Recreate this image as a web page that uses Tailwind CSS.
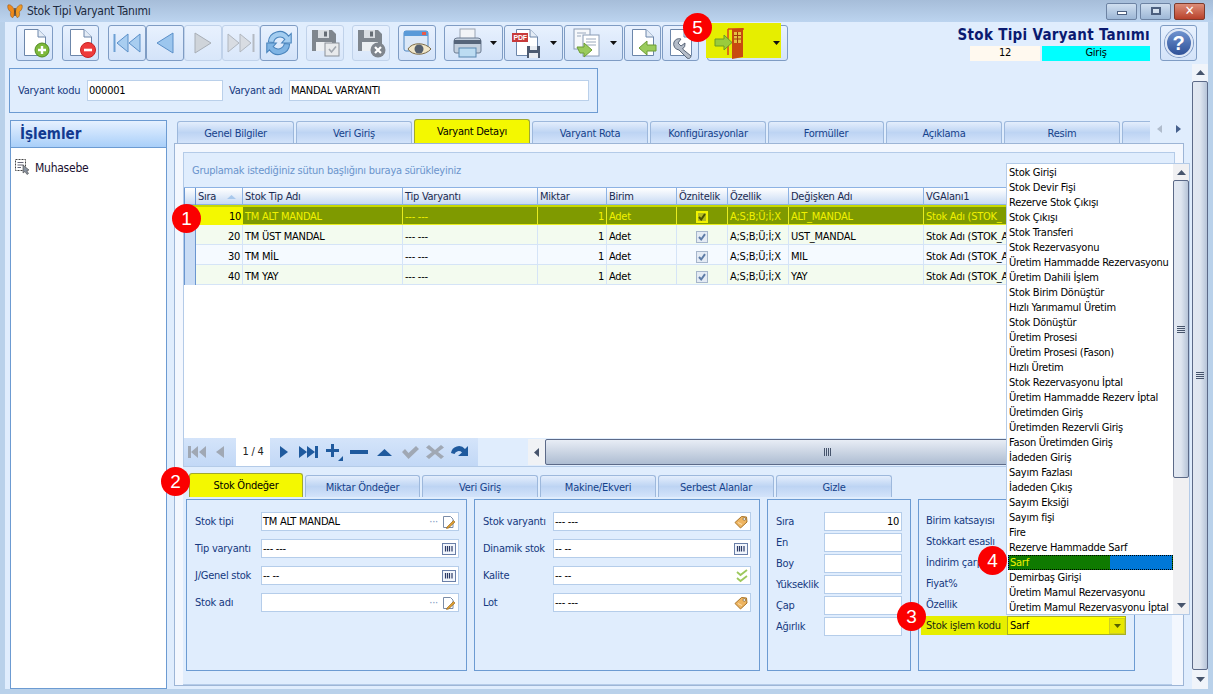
<!DOCTYPE html>
<html lang="tr">
<head>
<meta charset="UTF-8">
<title>Stok Tipi Varyant Tanımı</title>
<script src="https://cdn.jsdelivr.net/npm/@tailwindcss/browser@4"></script>
</head>
<body class="w-[1213px] h-[694px] overflow-hidden flex flex-col bg-[#b9d1ea] text-[11px] leading-[14px] tracking-[-0.25px] text-black font-['DejaVu_Sans_Condensed','Noto_Sans',sans-serif]">

<!-- ortak ikonlar -->
<svg class="hidden">
  <symbol id="page" viewBox="0 0 32 32"><path d="M5.500 2.500H19L26.500 10V28.500H5.500Z" fill="#fff" stroke="#6c86aa"/><path d="M19 2.500V10H26.500" fill="#e4ecf6" stroke="#6c86aa"/></symbol>
  <symbol id="barcode" viewBox="0 0 14 12"><rect x=".5" y=".5" width="13" height="11" fill="#f2f6fc" stroke="#6a7fa8"/><path d="M3.500 3V8.500M5.500 3V8.500M7.500 3V8.500M10 3V8.500" stroke="#2b3a66" stroke-width="1.200"/></symbol>
  <symbol id="note" viewBox="0 0 14 14"><path d="M1.500 1.500H8.500L11 4V12.500H1.500Z" fill="#fff" stroke="#7a8ca8"/><path d="M5 12L11.500 5.500L13 7L6.500 13L4.500 13.500Z" fill="#e0a030" stroke="#8a5a18" stroke-width=".6"/></symbol>
  <symbol id="tag" viewBox="0 0 14 14"><path d="M1 7.500L7.500 1.500L12.500 2L13 7L6.500 13Z" fill="#eeb460" stroke="#a87428"/><circle cx="10.300" cy="4" r="1.300" fill="#fff" stroke="#6c5428" stroke-width=".6"/><path d="M4 7.500L8 9.500" stroke="#fbe0b0"/></symbol>
  <symbol id="floppy" viewBox="0 0 32 32"><path d="M3 3H23L27 7V24H3Z" fill="#7f868e"/><rect x="9" y="3" width="11" height="8" fill="#d9dde2"/><rect x="15" y="4.500" width="3" height="5" fill="#666d75"/><rect x="7" y="15" width="16" height="9" fill="#eceff2"/></symbol>
  <symbol id="chk" viewBox="0 0 12 12"><rect x=".5" y=".5" width="11" height="11" fill="#e4ebf4" stroke="#a6b6cb"/><path d="M3 6L5.200 8.500L9 3.200" fill="none" stroke="#5e7ca6" stroke-width="2"/></symbol>
  <symbol id="grip" viewBox="0 0 8 7"><path d="M0 .5H8M0 2.500H8M0 4.500H8M0 6.500H8" stroke="#46546c"/></symbol>
</svg>

<!-- başlık çubuğu -->
<header class="h-[22px] shrink-0 flex items-center pl-[7px] pr-[8px] bg-linear-to-b from-[#a6bdd9] to-[#bcd4ef]">
  <svg width="16" height="16" viewBox="0 0 16 16"><path d="M7.500 8C6 3 3 1 1 2C0 5 2 8 4 9C2.500 11 4 15 6 14.500C7 13 7.500 10 7.500 8Z" fill="#ee8a1c" stroke="#8a4a10" stroke-width=".5"/><path d="M8.500 8C10 3 13 1 15 2C16 5 14 8 12 9C13.500 11 12 15 10 14.500C9 13 8.500 10 8.500 8Z" fill="#f09a24" stroke="#8a4a10" stroke-width=".5"/><path d="M8 5V13" stroke="#3a2a18" stroke-width="1.200"/></svg>
  <span class="ml-[4px] text-[12px] text-[#1c2a40]">Stok Tipi Varyant Tanımı</span>
  <div class="ml-auto flex gap-[3px]">
    <div class="w-[31px] h-[17px] rounded-[2px] border border-[#6d83a3] bg-linear-to-b from-[#d0dff0] to-[#9db7d6] flex items-center justify-center"><div class="w-[10px] h-[4px] mt-[3px] bg-white border border-[#4c5f7e]"></div></div>
    <div class="w-[31px] h-[17px] rounded-[2px] border border-[#6d83a3] bg-linear-to-b from-[#d0dff0] to-[#9db7d6] flex items-center justify-center"><div class="w-[10px] h-[8px] bg-white/40 border-2 border-[#4c5f7e]"></div></div>
    <div class="w-[31px] h-[17px] rounded-[2px] border border-[#7d3a2c] bg-linear-to-b from-[#dc8d78] to-[#b8402a] flex items-center justify-center text-white font-bold text-[13px]">✕</div>
  </div>
</header>

<div class="flex-1 flex flex-col mx-[5px] mb-[5px] bg-[#e0edfd] relative">

  <!-- araç çubuğu -->
  <div class="h-[42px] shrink-0 flex pt-[3px] pl-[11px]">
    <button class="w-[37px] h-[36px] rounded-[3px] border border-[#7f9cc4] bg-linear-to-b from-[#e8f1fe] to-[#d3e3f9] flex items-center justify-center">
      <svg width="32" height="32" viewBox="0 0 32 32"><use href="#page"/><circle cx="23" cy="23" r="7" fill="#7db83a" stroke="#4f8a20"/><path d="M23 19V27M19 23H27" stroke="#fff" stroke-width="2.400"/></svg>
    </button>
    <button class="ml-[9px] w-[37px] h-[36px] rounded-[3px] border border-[#7f9cc4] bg-linear-to-b from-[#e8f1fe] to-[#d3e3f9] flex items-center justify-center">
      <svg width="32" height="32" viewBox="0 0 32 32"><use href="#page"/><circle cx="23" cy="23" r="7.500" fill="#ee3a3a" stroke="#c82020"/><path d="M19 23H27" stroke="#fff" stroke-width="2.600"/></svg>
    </button>
    <button class="ml-[9px] w-[38px] h-[36px] rounded-[3px] border border-[#7f9cc4] bg-linear-to-b from-[#e8f1fe] to-[#d3e3f9] flex items-center justify-center">
      <svg width="32" height="32" viewBox="0 0 32 32"><path d="M3.500 7V25" stroke="#6da0d4" stroke-width="2"/><path d="M17 7L6 16L17 25Z" fill="#a8cdf0" stroke="#5a8fc8"/><path d="M29 7L18 16L29 25Z" fill="#a8cdf0" stroke="#5a8fc8"/></svg>
    </button>
    <button class="w-[38px] h-[36px] rounded-[3px] border border-[#7f9cc4] bg-linear-to-b from-[#e8f1fe] to-[#d3e3f9] flex items-center justify-center">
      <svg width="32" height="32" viewBox="0 0 32 32"><path d="M24 6V26L8 16Z" fill="#9cc6ee" stroke="#5a8fc8"/></svg>
    </button>
    <button class="w-[38px] h-[36px] rounded-[3px] border border-[#c0d2ea] bg-linear-to-b from-[#e8f1fe] to-[#d9e7fa] flex items-center justify-center">
      <svg width="32" height="32" viewBox="0 0 32 32"><path d="M8 6V26L24 16Z" fill="#cfd4da" stroke="#a8aeb6"/></svg>
    </button>
    <button class="w-[38px] h-[36px] rounded-[3px] border border-[#c0d2ea] bg-linear-to-b from-[#e8f1fe] to-[#d9e7fa] flex items-center justify-center">
      <svg width="32" height="32" viewBox="0 0 32 32"><path d="M28.500 7V25" stroke="#b4bac2" stroke-width="2"/><path d="M15 7L26 16L15 25Z" fill="#d8dce2" stroke="#b0b6be"/><path d="M3 7L14 16L3 25Z" fill="#d8dce2" stroke="#b0b6be"/></svg>
    </button>
    <button class="w-[38px] h-[36px] rounded-[3px] border border-[#7f9cc4] bg-linear-to-b from-[#e8f1fe] to-[#d3e3f9] flex items-center justify-center">
      <svg width="34" height="34" viewBox="0 0 32 32"><path d="M6 15A10.500 10.500 0 0 1 25 9.500L27.500 7V16H18.500L21.500 12.500A6 6 0 0 0 11 15.500Z" fill="#a4cdf0" stroke="#4a84bc"/><path d="M26 17A10.500 10.500 0 0 1 7 22.500L4.500 25V16H13.500L10.500 19.500A6 6 0 0 0 21 16.500Z" fill="#7fb4e4" stroke="#4a84bc"/></svg>
    </button>
    <button class="ml-[8px] w-[38px] h-[36px] rounded-[3px] border border-[#c0d2ea] bg-linear-to-b from-[#e8f1fe] to-[#d9e7fa] flex items-center justify-center">
      <svg width="32" height="32" viewBox="0 0 32 32"><use href="#floppy"/><rect x="16" y="16" width="14" height="13" fill="#e8eaec" stroke="#8a9098"/><path d="M20 22L22.500 25L27 19.500" fill="none" stroke="#a0a6ae" stroke-width="1.600"/></svg>
    </button>
    <button class="ml-[8px] w-[38px] h-[36px] rounded-[3px] border border-[#c0d2ea] bg-linear-to-b from-[#e8f1fe] to-[#d9e7fa] flex items-center justify-center">
      <svg width="32" height="32" viewBox="0 0 32 32"><use href="#floppy"/><circle cx="23" cy="23" r="7.500" fill="#80868e"/><path d="M20 20L26 26M26 20L20 26" stroke="#fff" stroke-width="2.200"/></svg>
    </button>
    <button class="ml-[8px] w-[38px] h-[36px] rounded-[3px] border border-[#7f9cc4] bg-linear-to-b from-[#e8f1fe] to-[#d3e3f9] flex items-center justify-center">
      <svg width="32" height="32" viewBox="0 0 32 32"><rect x="3" y="4" width="24" height="20" rx="2" fill="#dbe8f8" stroke="#4f86c0"/><rect x="3" y="4" width="24" height="5" fill="#5a9ad8"/><rect x="21" y="5" width="4" height="3" fill="#e85a4a"/><path d="M7 22C11 15 24 15 30 22C24 29 11 29 7 22Z" fill="#f0e6c8" stroke="#7a6a48"/><circle cx="18" cy="22" r="4.500" fill="#55606e"/></svg>
    </button>
    <button class="ml-[8px] w-[59px] h-[36px] rounded-[3px] border border-[#7f9cc4] bg-linear-to-b from-[#e8f1fe] to-[#d3e3f9] flex items-center pl-[6px]">
      <svg width="32" height="32" viewBox="0 0 32 32"><rect x="9" y="2" width="15" height="11" fill="#f2f4f7" stroke="#9aa4b2"/><path d="M3 14Q3 11 6 11H27Q30 11 30 14V24Q30 26 28 26H5Q3 26 3 24Z" fill="#c4d0de" stroke="#6c7c92"/><rect x="3" y="13" width="27" height="4" fill="#56657a"/><rect x="8" y="21" width="17" height="9" fill="#bcdcf2" stroke="#5a87b0"/></svg>
      <svg class="ml-[7px]" width="7" height="4" viewBox="0 0 7 4"><path d="M0 0H7L3.500 4Z" fill="#111"/></svg>
    </button>
    <button class="ml-[1px] w-[59px] h-[36px] rounded-[3px] border border-[#7f9cc4] bg-linear-to-b from-[#e8f1fe] to-[#d3e3f9] flex items-center pl-[6px]">
      <svg width="32" height="32" viewBox="0 0 32 32"><use href="#page"/><rect x="1" y="6" width="16" height="9" fill="#c83a3a"/><text x="2.500" y="13.200" font-size="7" font-weight="700" fill="#fff" font-family="Liberation Sans, sans-serif">PDF</text><path d="M16 19H29V31H16Z" fill="#4c5a70"/><rect x="19" y="19" width="7" height="4" fill="#e8ecf2"/><rect x="18" y="26" width="9" height="5" fill="#e8ecf2"/></svg>
      <svg class="ml-[7px]" width="7" height="4" viewBox="0 0 7 4"><path d="M0 0H7L3.500 4Z" fill="#111"/></svg>
    </button>
    <button class="ml-[1px] w-[59px] h-[36px] rounded-[3px] border border-[#7f9cc4] bg-linear-to-b from-[#e8f1fe] to-[#d3e3f9] flex items-center pl-[6px]">
      <svg width="32" height="32" viewBox="0 0 32 32"><rect x="3" y="2" width="16" height="20" fill="#f6f8fb" stroke="#8a9cb6"/><rect x="12" y="8" width="16" height="21" fill="#fff" stroke="#8a9cb6"/><path d="M6 6H15M6 9H10M15 12H25M15 15H25M15 18H25" stroke="#9aa8bc"/><path d="M6 20H13V16L21 23L13 30V26H9Z" fill="#9acb5c" stroke="#6c9c34"/></svg>
      <svg class="ml-[7px]" width="7" height="4" viewBox="0 0 7 4"><path d="M0 0H7L3.500 4Z" fill="#111"/></svg>
    </button>
    <button class="ml-[1px] w-[37px] h-[36px] rounded-[3px] border border-[#7f9cc4] bg-linear-to-b from-[#e8f1fe] to-[#d3e3f9] flex items-center justify-center">
      <svg width="32" height="32" viewBox="0 0 32 32"><use href="#page"/><path d="M12 21L20 14V18H29V24H20V28Z" fill="#9acb5c" stroke="#6c9c34"/></svg>
    </button>
    <button class="ml-[1px] w-[37px] h-[36px] rounded-[3px] border border-[#7f9cc4] bg-linear-to-b from-[#e8f1fe] to-[#d3e3f9] flex items-center justify-center">
      <svg width="32" height="32" viewBox="0 0 32 32"><use href="#page"/><path d="M9 15A6 6 0 0 1 16 12L13 16L16 19L20 16A6 6 0 0 1 17.500 22L26 29A2.500 2.500 0 0 1 22 31L14 23A6 6 0 0 1 9 15Z" fill="#b4bcc8" stroke="#5a6678"/></svg>
    </button>
    <button class="ml-[8px] relative w-[81px] h-[36px] rounded-[3px] border border-[#7f9cc4] bg-linear-to-b from-[#e8f1fe] to-[#d3e3f9] flex items-center pl-[6px]">
      <span class="absolute left-[-2px] top-[-3px] w-[75px] h-[35px] bg-[#e6ee00]"></span>
      <svg class="relative" width="42" height="36" viewBox="0 0 42 36"><path d="M14 4H30M14 4V30" stroke="#d8481a" stroke-width="1.500" fill="none"/><path d="M18 4L29 3V32L18 34Z" fill="#c84a10"/><rect x="20" y="7" width="7" height="11" fill="#e6c040"/><path d="M23.500 7V18M20 10.500H27M20 14H27" stroke="#a03a08"/><path d="M1 14H10V10L18 17.500L10 25V21H1Z" fill="#9acb3c" stroke="#6c9c24"/></svg>
      <svg class="relative ml-[17px]" width="7" height="4" viewBox="0 0 7 4"><path d="M0 0H7L3.500 4Z" fill="#111"/></svg>
    </button>
    <div class="ml-auto mr-[11px] flex">
      <div class="flex flex-col items-end w-[181px]">
        <div class="h-[21px] text-[15px] leading-[21px] font-bold text-[#0a1a70] whitespace-nowrap tracking-[0.3px]">Stok Tipi Varyant Tanımı</div>
        <div class="flex gap-[2px]">
          <div class="w-[70px] h-[15px] bg-[#fff9ef] text-center">12</div>
          <div class="w-[108px] h-[15px] bg-[#00ffff] text-center">Giriş</div>
        </div>
      </div>
      <button class="ml-[10px] w-[37px] h-[36px] rounded-[3px] border border-[#7f9cc4] bg-linear-to-b from-[#e8f1fe] to-[#d3e3f9] flex items-center justify-center">
        <span class="w-[28px] h-[28px] rounded-full border-2 border-[#dfe8f6] bg-linear-to-b from-[#6f93cf] to-[#2f5198] text-white font-bold text-[20px] leading-[24px] text-center font-['Liberation_Sans',sans-serif] shadow-[0_0_0_1px_#7c98c4]">?</span>
      </button>
    </div>
  </div>

  <!-- varyant başlığı -->
  <div class="ml-[4px] mt-[4px] w-[589px] h-[45px] shrink-0 border border-[#6c9bd2] flex items-center pl-[8px] text-[#15397f]">
    <span class="w-[69px]">Varyant kodu</span>
    <div class="w-[136px] h-[21px] bg-white border border-[#bad0ea] px-[1px] leading-[19px] text-black">000001</div>
    <span class="ml-[6px] w-[60px]">Varyant adı</span>
    <div class="w-[300px] h-[21px] bg-white border border-[#bad0ea] px-[1px] leading-[19px] text-black">MANDAL VARYANTI</div>
  </div>

  <div class="flex-1 flex min-h-0 mt-[7px]">
    <!-- sol panel -->
    <aside class="ml-[5px] w-[157px] shrink-0 border border-[#6c9bd2] bg-white">
      <div class="h-[27px] border-b border-[#6c9bd2] bg-linear-to-b from-[#e6f1ff] to-[#a9cff9] pl-[9px] text-[15px] leading-[26px] font-bold tracking-normal text-[#123a90]">İşlemler</div>
      <div class="flex items-center pl-[4px] pt-[11px]">
        <svg width="16" height="16" viewBox="0 0 16 16"><rect x=".5" y=".5" width="10" height="11" fill="none" stroke="#444" stroke-dasharray="2 1"/><path d="M2.500 3.500H8.500M2.500 6H8.500M2.500 8.500H6" stroke="#667"/><path d="M8 6V14L10 12.500L12 15.500L13.500 14.500L11.800 11.800L14 11Z" fill="#8a94a2" stroke="#444" stroke-width=".6"/></svg>
        <span class="ml-[4px] text-[12px] text-[#1a1030] translate-y-[1px]">Muhasebe</span>
      </div>
    </aside>

    <!-- sekmeler -->
    <section class="ml-[7px] w-[1010px] shrink-0 flex flex-col pb-[3px] relative">
      <nav class="h-[23px] shrink-0 flex items-end gap-[2px] pl-[3px] text-[#15428b]">
        <div class="w-[117px] h-[22px] rounded-t-[3px] border border-b-0 border-[#9db8dc] bg-linear-to-b from-[#e4eefc] via-[#bdd4f3] to-[#d3e3fa] text-center leading-[23px]">Genel Bilgiler</div>
        <div class="w-[116px] h-[22px] rounded-t-[3px] border border-b-0 border-[#9db8dc] bg-linear-to-b from-[#e4eefc] via-[#bdd4f3] to-[#d3e3fa] text-center leading-[23px]">Veri Giriş</div>
        <div class="w-[116px] h-[24px] rounded-t-[3px] border border-b-0 border-[#a0a830] bg-[#f4f800] text-black text-center leading-[23px]">Varyant Detayı</div>
        <div class="w-[116px] h-[22px] rounded-t-[3px] border border-b-0 border-[#9db8dc] bg-linear-to-b from-[#e4eefc] via-[#bdd4f3] to-[#d3e3fa] text-center leading-[23px]">Varyant Rota</div>
        <div class="w-[116px] h-[22px] rounded-t-[3px] border border-b-0 border-[#9db8dc] bg-linear-to-b from-[#e4eefc] via-[#bdd4f3] to-[#d3e3fa] text-center leading-[23px]">Konfigürasyonlar</div>
        <div class="w-[116px] h-[22px] rounded-t-[3px] border border-b-0 border-[#9db8dc] bg-linear-to-b from-[#e4eefc] via-[#bdd4f3] to-[#d3e3fa] text-center leading-[23px]">Formüller</div>
        <div class="w-[116px] h-[22px] rounded-t-[3px] border border-b-0 border-[#9db8dc] bg-linear-to-b from-[#e4eefc] via-[#bdd4f3] to-[#d3e3fa] text-center leading-[23px]">Açıklama</div>
        <div class="w-[116px] h-[22px] rounded-t-[3px] border border-b-0 border-[#9db8dc] bg-linear-to-b from-[#e4eefc] via-[#bdd4f3] to-[#d3e3fa] text-center leading-[23px]">Resim</div>
        <div class="w-[28px] h-[22px] rounded-tl-[3px] border border-b-0 border-r-0 border-[#9db8dc] bg-linear-to-b from-[#e4eefc] via-[#bdd4f3] to-[#d3e3fa]"></div>
        <div class="self-start mt-[5px] ml-[5px] flex gap-[14px]">
          <svg width="5" height="8" viewBox="0 0 5 8"><path d="M5 0V8L0 4Z" fill="#b0bccc"/></svg>
          <svg width="5" height="8" viewBox="0 0 5 8"><path d="M0 0V8L5 4Z" fill="#46608c"/></svg>
        </div>
      </nav>

      <div class="flex-1 min-h-0 border border-[#9db5d6] bg-[#f3f7fe] pt-[8px] pl-[8px] pr-[8px] flex flex-col">
        <!-- tablo -->
        <div class="h-[315px] shrink-0 border border-[#b4cbe8] bg-[#e0edfd] flex flex-col">
          <div class="h-[34px] shrink-0 pl-[8px] pt-[11px] text-[#6a94cc]">Gruplamak istediğiniz sütun başlığını buraya sürükleyiniz</div>
          <div class="h-[18px] shrink-0 grid grid-cols-[12px_47px_160px_135px_69px_70px_51px_61px_135px_82px] border-y border-[#8db2e3] bg-linear-to-b from-white to-[#c8daf3] text-[#1a2a50] leading-[17px]">
            <div class="border-x border-[#6a96d0]"></div>
            <div class="border-r border-[#8db2e3] pl-[2px] flex items-center justify-between pr-[6px]">Sıra<svg width="9" height="4" viewBox="0 0 9 4"><path d="M0 4H9L4.500 0Z" fill="#a8c8ec"/></svg></div>
            <div class="border-r border-[#8db2e3] pl-[2px]">Stok Tip Adı</div>
            <div class="border-r border-[#8db2e3] pl-[2px]">Tip Varyantı</div>
            <div class="border-r border-[#8db2e3] pl-[2px]">Miktar</div>
            <div class="border-r border-[#8db2e3] pl-[2px]">Birim</div>
            <div class="border-r border-[#8db2e3] pl-[2px]">Öznitelik</div>
            <div class="border-r border-[#8db2e3] pl-[2px]">Özellik</div>
            <div class="border-r border-[#8db2e3] pl-[2px]">Değişken Adı</div>
            <div class="pl-[2px]">VGAlanı1</div>
          </div>
          <div class="h-[20px] shrink-0 grid grid-cols-[12px_47px_160px_135px_69px_70px_51px_61px_135px_79px] border-b border-[#e8ec20] leading-[19px] text-[#f2f200] bg-[#7f9a00] border-t-2 border-t-[#c8d800]">
            <div class="bg-[#c9dcf5] border-x border-[#6a96d0]"></div>
            <div class="bg-[#f4f800] text-black text-right pr-[2px]">10</div>
            <div class="border-r border-[#e8ec20] pl-[2px]">TM ALT MANDAL</div>
            <div class="border-r border-[#e8ec20] pl-[2px]">--- ---</div>
            <div class="border-r border-[#e8ec20] text-right pr-[2px]">1</div>
            <div class="border-r border-[#e8ec20] pl-[2px]">Adet</div>
            <div class="border-r border-[#e8ec20] flex items-center justify-center"><span class="w-[12px] h-[12px] border-2 border-[#f2f200] bg-[#b4bc20] flex items-center justify-center"><svg width="8" height="8" viewBox="0 0 8 8"><path d="M1 4L3.200 6.500L7 1" fill="none" stroke="#4a5200" stroke-width="2"/></svg></span></div>
            <div class="border-r border-[#e8ec20] pl-[2px] whitespace-nowrap">A;S;B;Ü;İ;X</div>
            <div class="border-r border-[#e8ec20] pl-[2px]">ALT_MANDAL</div>
            <div class="pl-[2px] whitespace-nowrap">Stok Adı (STOK_</div>
          </div>
          <div class="h-[20px] shrink-0 grid grid-cols-[12px_47px_160px_135px_69px_70px_51px_61px_135px_82px] border-b border-[#d5e4f7] leading-[23px] bg-[#f3fbef]">
            <div class="bg-[#c9dcf5] border-x border-b border-[#6a96d0]"></div>
            <div class="text-right border-r border-[#d5e4f7] pr-[2px]">20</div>
            <div class="border-r border-[#d5e4f7] pl-[2px]">TM ÜST MANDAL</div>
            <div class="border-r border-[#d5e4f7] pl-[2px]">--- ---</div>
            <div class="border-r border-[#d5e4f7] text-right pr-[2px]">1</div>
            <div class="border-r border-[#d5e4f7] pl-[2px]">Adet</div>
            <div class="border-r border-[#d5e4f7] flex items-center justify-center"><svg width="12" height="12"><use href="#chk"/></svg></div>
            <div class="border-r border-[#d5e4f7] pl-[2px] whitespace-nowrap">A;S;B;Ü;İ;X</div>
            <div class="border-r border-[#d5e4f7] pl-[2px]">UST_MANDAL</div>
            <div class="pl-[2px] whitespace-nowrap">Stok Adı (STOK_A</div>
          </div>
          <div class="h-[20px] shrink-0 grid grid-cols-[12px_47px_160px_135px_69px_70px_51px_61px_135px_82px] border-b border-[#d5e4f7] leading-[23px] bg-[#f5faff]">
            <div class="bg-[#c9dcf5] border-x border-b border-[#6a96d0]"></div>
            <div class="text-right border-r border-[#d5e4f7] pr-[2px]">30</div>
            <div class="border-r border-[#d5e4f7] pl-[2px]">TM MİL</div>
            <div class="border-r border-[#d5e4f7] pl-[2px]">--- ---</div>
            <div class="border-r border-[#d5e4f7] text-right pr-[2px]">1</div>
            <div class="border-r border-[#d5e4f7] pl-[2px]">Adet</div>
            <div class="border-r border-[#d5e4f7] flex items-center justify-center"><svg width="12" height="12"><use href="#chk"/></svg></div>
            <div class="border-r border-[#d5e4f7] pl-[2px] whitespace-nowrap">A;S;B;Ü;İ;X</div>
            <div class="border-r border-[#d5e4f7] pl-[2px]">MIL</div>
            <div class="pl-[2px] whitespace-nowrap">Stok Adı (STOK_A</div>
          </div>
          <div class="h-[20px] shrink-0 grid grid-cols-[12px_47px_160px_135px_69px_70px_51px_61px_135px_82px] border-b border-[#d5e4f7] leading-[23px] bg-[#f3fbef]">
            <div class="bg-[#c9dcf5] border-x border-b border-[#6a96d0]"></div>
            <div class="text-right border-r border-[#d5e4f7] pr-[2px]">40</div>
            <div class="border-r border-[#d5e4f7] pl-[2px]">TM YAY</div>
            <div class="border-r border-[#d5e4f7] pl-[2px]">--- ---</div>
            <div class="border-r border-[#d5e4f7] text-right pr-[2px]">1</div>
            <div class="border-r border-[#d5e4f7] pl-[2px]">Adet</div>
            <div class="border-r border-[#d5e4f7] flex items-center justify-center"><svg width="12" height="12"><use href="#chk"/></svg></div>
            <div class="border-r border-[#d5e4f7] pl-[2px] whitespace-nowrap">A;S;B;Ü;İ;X</div>
            <div class="border-r border-[#d5e4f7] pl-[2px]">YAY</div>
            <div class="pl-[2px] whitespace-nowrap">Stok Adı (STOK_A</div>
          </div>
          <div class="flex-1 bg-white"></div>
          <!-- gezinti -->
          <div class="h-[28px] shrink-0 flex">
            <div class="w-[52px] bg-linear-to-b from-[#d4e4fa] to-[#c2d8f6] flex items-center pl-[4px] gap-[10px]">
              <svg width="18" height="12" viewBox="0 0 18 12"><path d="M0 0H3V12H0ZM10 0V12L3 6ZM18 0V12L11 6Z" fill="#a0a8b4"/></svg>
              <svg width="8" height="12" viewBox="0 0 8 12"><path d="M8 0V12L0 6Z" fill="#a0a8b4"/></svg>
            </div>
            <div class="w-[34px] bg-white text-center leading-[27px] text-[#222]">1 / 4</div>
            <div class="w-[208px] bg-linear-to-b from-[#d4e4fa] to-[#c2d8f6] flex items-center pl-[10px] relative">
              <svg width="8" height="12" viewBox="0 0 8 12"><path d="M0 0V12L8 6Z" fill="#1f5a9e"/></svg>
              <svg class="ml-[11px]" width="19" height="12" viewBox="0 0 19 12"><path d="M0 0V12L8 6ZM8 0V12L16 6ZM16 0H19V12H16Z" fill="#1f5a9e"/></svg>
              <svg class="ml-[7px]" width="18" height="18" viewBox="0 0 18 18"><path d="M6 1H9V6H14V9H9V14H6V9H1V6H6Z" fill="#1f5a9e"/><path d="M18 13V18H13Z" fill="#1f5a9e"/></svg>
              <svg class="ml-[7px]" width="18" height="4" viewBox="0 0 18 4"><rect width="18" height="4" fill="#1f5a9e"/></svg>
              <svg class="ml-[9px]" width="15" height="7" viewBox="0 0 15 7"><path d="M0 7L7.500 0L15 7Z" fill="#1f5a9e"/></svg>
              <svg class="ml-[9px]" width="18" height="14" viewBox="0 0 18 14"><path d="M1 7L4 4L7.500 8L15 1L18 4L7.500 14Z" fill="#a0a8b4"/></svg>
              <svg class="ml-[7px]" width="18" height="14" viewBox="0 0 18 14"><path d="M3 0L9 5L15 0L18 2.500L12 7L18 11.500L15 14L9 9L3 14L0 11.500L6 7L0 2.500Z" fill="#a0a8b4"/></svg>
              <svg class="ml-[6px]" width="19" height="15" viewBox="0 0 19 15"><path d="M1 8A8 8 0 0 1 15 4L18 1V11H8L12 7.500A4.500 4.500 0 0 0 4.500 9Z" fill="#1f5a9e"/></svg>
            </div>
            <div class="w-[50px]"></div>
            <div class="w-[17px] h-[26px] mt-[1px] bg-[#f0f2f5] flex items-center justify-center"><svg width="5" height="9" viewBox="0 0 5 9"><path d="M5 0V9L0 4.500Z" fill="#46546c"/></svg></div>
            <div class="w-[565px] h-[26px] mt-[1px] rounded-[2px] border border-[#5c6a88] bg-linear-to-b from-[#e8edf5] to-[#aebdd2] flex items-center justify-center"><svg width="7" height="8" viewBox="0 0 7 8"><path d="M.5 0V8M2.500 0V8M4.500 0V8M6.500 0V8" stroke="#46546c"/></svg></div>
          </div>
        </div>

        <!-- alt sekmeler -->
        <div class="flex-1 min-h-0 bg-[#e0edfd] w-[989px] pl-[3px] pr-[3px] border-b border-[#b4cbe8]">
          <div class="h-[30px] flex items-end gap-[2px] pl-[3px] text-[#15428b]">
            <div class="w-[114px] h-[24px] rounded-t-[3px] border border-b-0 border-[#a0a830] bg-[#f4f800] text-black text-center leading-[24px]">Stok Öndeğer</div>
            <div class="w-[115px] h-[22px] rounded-t-[3px] border border-b-0 border-[#9db8dc] bg-linear-to-b from-[#e4eefc] via-[#bdd4f3] to-[#d3e3fa] text-center leading-[23px]">Miktar Öndeğer</div>
            <div class="w-[116px] h-[22px] rounded-t-[3px] border border-b-0 border-[#9db8dc] bg-linear-to-b from-[#e4eefc] via-[#bdd4f3] to-[#d3e3fa] text-center leading-[23px]">Veri Giriş</div>
            <div class="w-[116px] h-[22px] rounded-t-[3px] border border-b-0 border-[#9db8dc] bg-linear-to-b from-[#e4eefc] via-[#bdd4f3] to-[#d3e3fa] text-center leading-[23px]">Makine/Ekveri</div>
            <div class="w-[116px] h-[22px] rounded-t-[3px] border border-b-0 border-[#9db8dc] bg-linear-to-b from-[#e4eefc] via-[#bdd4f3] to-[#d3e3fa] text-center leading-[23px]">Serbest Alanlar</div>
            <div class="w-[116px] h-[22px] rounded-t-[3px] border border-b-0 border-[#9db8dc] bg-linear-to-b from-[#e4eefc] via-[#bdd4f3] to-[#d3e3fa] text-center leading-[23px]">Gizle</div>
          </div>
          <div class="mt-[2px] h-[172px] flex text-[#15397f]">
            <!-- stok alanları -->
            <div class="w-[281px] border border-[#6c9bd2] pt-[12px] pl-[8px] flex flex-col gap-[8px]">
              <div class="flex items-center h-[19px]"><span class="w-[66px]">Stok tipi</span><div class="w-[198px] h-[19px] bg-white border border-[#b5cdea] pl-[1px] text-black flex items-center justify-between pr-[2px]">TM ALT MANDAL<span class="flex items-center gap-[4px] text-[#7b96c0]">···<svg width="14" height="14"><use href="#note"/></svg></span></div></div>
              <div class="flex items-center h-[19px]"><span class="w-[66px]">Tip varyantı</span><div class="w-[198px] h-[19px] bg-white border border-[#b5cdea] pl-[1px] text-black flex items-center justify-between pr-[2px]">--- ---<svg width="14" height="12"><use href="#barcode"/></svg></div></div>
              <div class="flex items-center h-[19px]"><span class="w-[66px]">J/Genel stok</span><div class="w-[198px] h-[19px] bg-white border border-[#b5cdea] pl-[1px] text-black flex items-center justify-between pr-[2px]">-- --<svg width="14" height="12"><use href="#barcode"/></svg></div></div>
              <div class="flex items-center h-[19px]"><span class="w-[66px]">Stok adı</span><div class="w-[198px] h-[19px] bg-white border border-[#b5cdea] pl-[1px] text-black flex items-center justify-end pr-[2px]"><span class="flex items-center gap-[4px] text-[#7b96c0]">···<svg width="14" height="14"><use href="#note"/></svg></span></div></div>
            </div>
            <div class="ml-[7px] w-[286px] border border-[#6c9bd2] pt-[12px] pl-[8px] flex flex-col gap-[8px]">
              <div class="flex items-center h-[19px]"><span class="w-[70px]">Stok varyantı</span><div class="w-[198px] h-[19px] bg-white border border-[#b5cdea] pl-[1px] text-black flex items-center justify-between pr-[2px]">--- ---<svg width="14" height="14"><use href="#tag"/></svg></div></div>
              <div class="flex items-center h-[19px]"><span class="w-[70px]">Dinamik stok</span><div class="w-[198px] h-[19px] bg-white border border-[#b5cdea] pl-[1px] text-black flex items-center justify-between pr-[2px]">-- --<svg width="14" height="12"><use href="#barcode"/></svg></div></div>
              <div class="flex items-center h-[19px]"><span class="w-[70px]">Kalite</span><div class="w-[198px] h-[19px] bg-white border border-[#b5cdea] pl-[1px] text-black flex items-center justify-between pr-[2px]">-- --<svg width="12" height="14" viewBox="0 0 12 14"><path d="M1 3L4.500 6L11 1M1 9L4.500 12L11 7" fill="none" stroke="#9cc85c" stroke-width="1.800"/></svg></div></div>
              <div class="flex items-center h-[19px]"><span class="w-[70px]">Lot</span><div class="w-[198px] h-[19px] bg-white border border-[#b5cdea] pl-[1px] text-black flex items-center justify-between pr-[2px]">--- ---<svg width="14" height="14"><use href="#tag"/></svg></div></div>
            </div>
            <div class="ml-[7px] w-[144px] border border-[#6c9bd2] pt-[12px] pl-[8px] flex flex-col gap-[2px]">
              <div class="flex items-center h-[19px]"><span class="w-[48px]">Sıra</span><div class="w-[78px] h-[19px] bg-white border border-[#b5cdea] text-black text-right pr-[2px] leading-[17px]">10</div></div>
              <div class="flex items-center h-[19px]"><span class="w-[48px]">En</span><div class="w-[78px] h-[19px] bg-white border border-[#b5cdea]"></div></div>
              <div class="flex items-center h-[19px]"><span class="w-[48px]">Boy</span><div class="w-[78px] h-[19px] bg-white border border-[#b5cdea]"></div></div>
              <div class="flex items-center h-[19px]"><span class="w-[48px]">Yükseklik</span><div class="w-[78px] h-[19px] bg-white border border-[#b5cdea]"></div></div>
              <div class="flex items-center h-[19px]"><span class="w-[48px]">Çap</span><div class="w-[78px] h-[19px] bg-white border border-[#b5cdea]"></div></div>
              <div class="flex items-center h-[19px]"><span class="w-[48px]">Ağırlık</span><div class="w-[78px] h-[19px] bg-white border border-[#b5cdea]"></div></div>
            </div>
            <div class="ml-[7px] w-[217px] border border-[#6c9bd2] pt-[11px] pl-[7px] flex flex-col gap-[2px]">
              <div class="h-[19px] flex items-center">Birim katsayısı</div>
              <div class="h-[19px] flex items-center">Stokkart esaslı</div>
              <div class="h-[19px] flex items-center">İndirim çarpanı</div>
              <div class="h-[19px] flex items-center">Fiyat%</div>
              <div class="h-[19px] flex items-center">Özellik</div>
              <div class="h-[19px] -ml-[5px] w-[205px] bg-[#e6ee00] flex items-center text-[#1a2a10]">
                <span class="pl-[5px] w-[86px]">Stok işlem kodu</span>
                <div class="w-[119px] h-[19px] bg-[#ffff00] border border-[#a8b020] flex items-center justify-between pl-[2px] text-black">Sarf<span class="w-[16px] h-[16px] bg-[#e8e800] border border-[#d0d020] flex items-center justify-center"><svg width="7" height="4" viewBox="0 0 7 4"><path d="M0 0H7L3.500 4Z" fill="#556000"/></svg></span></div>
              </div>
            </div>
          </div>
        </div>
      </div>
    </section>

    <!-- dikey kaydırma -->
    <div class="absolute right-0 top-[42px] bottom-0 w-[16px] bg-[#f0f4fa] flex flex-col">
      <div class="h-[17px] flex items-center justify-center"><svg width="9" height="5" viewBox="0 0 9 5"><path d="M0 5H9L4.500 0Z" fill="#46546c"/></svg></div>
      <div class="flex-1 rounded-[2px] border border-[#5c6a88] bg-linear-to-r from-[#e2e8f2] via-[#dfe6f0] to-[#b6c4d8] flex items-center justify-center"><svg width="8" height="7"><use href="#grip"/></svg></div>
      <div class="h-[19px] flex items-center justify-center"><svg width="9" height="5" viewBox="0 0 9 5"><path d="M0 0H9L4.500 5Z" fill="#46546c"/></svg></div>
    </div>
  </div>
</div>

<!-- açılır liste -->
<div class="absolute left-[1006px] top-[163px] w-[184px] h-[452px] bg-white border border-[#b4cbe8] flex z-10">
  <ul class="w-[167px] pt-[1px] pl-[1px] leading-[15px] whitespace-nowrap">
    <li class="h-[15px] pl-[1px]">Stok Girişi</li>
    <li class="h-[15px] pl-[1px]">Stok Devir Fişi</li>
    <li class="h-[15px] pl-[1px]">Rezerve Stok Çıkışı</li>
    <li class="h-[15px] pl-[1px]">Stok Çıkışı</li>
    <li class="h-[15px] pl-[1px]">Stok Transferi</li>
    <li class="h-[15px] pl-[1px]">Stok Rezervasyonu</li>
    <li class="h-[15px] pl-[1px]">Üretim Hammadde Rezervasyonu</li>
    <li class="h-[15px] pl-[1px]">Üretim Dahili İşlem</li>
    <li class="h-[15px] pl-[1px]">Stok Birim Dönüştür</li>
    <li class="h-[15px] pl-[1px]">Hızlı Yarımamul Üretim</li>
    <li class="h-[15px] pl-[1px]">Stok Dönüştür</li>
    <li class="h-[15px] pl-[1px]">Üretim Prosesi</li>
    <li class="h-[15px] pl-[1px]">Üretim Prosesi (Fason)</li>
    <li class="h-[15px] pl-[1px]">Hızlı Üretim</li>
    <li class="h-[15px] pl-[1px]">Stok Rezervasyonu İptal</li>
    <li class="h-[15px] pl-[1px]">Üretim Hammadde Rezerv İptal</li>
    <li class="h-[15px] pl-[1px]">Üretimden Giriş</li>
    <li class="h-[15px] pl-[1px]">Üretimden Rezervli Giriş</li>
    <li class="h-[15px] pl-[1px]">Fason Üretimden Giriş</li>
    <li class="h-[15px] pl-[1px]">İadeden Giriş</li>
    <li class="h-[15px] pl-[1px]">Sayım Fazlası</li>
    <li class="h-[15px] pl-[1px]">İadeden Çıkış</li>
    <li class="h-[15px] pl-[1px]">Sayım Eksiği</li>
    <li class="h-[15px] pl-[1px]">Sayım fişi</li>
    <li class="h-[15px] pl-[1px]">Fire</li>
    <li class="h-[15px] pl-[1px]">Rezerve Hammadde Sarf</li>
    <li class="h-[15px] w-[165px] pl-[1px] flex border border-dotted border-black leading-[13px] text-[#f2f200] bg-linear-to-r from-[#0f7a00] from-[62%] to-[#0078d7] to-[62%]">Sarf</li>
    <li class="h-[15px] pl-[1px]">Demirbaş Girişi</li>
    <li class="h-[15px] pl-[1px]">Üretim Mamul Rezervasyonu</li>
    <li class="h-[15px] pl-[1px]">Üretim Mamul Rezervasyonu İptal</li>
  </ul>
  <div class="w-[16px] flex flex-col bg-[#f0f0f2]">
    <div class="h-[16px] flex items-center justify-center"><svg width="9" height="5" viewBox="0 0 9 5"><path d="M0 5H9L4.500 0Z" fill="#46546c"/></svg></div>
    <div class="h-[298px] rounded-[2px] border border-[#5c6a88] bg-linear-to-r from-[#e2e8f2] via-[#dfe6f0] to-[#b6c4d8] flex items-center justify-center"><svg width="8" height="7"><use href="#grip"/></svg></div>
    <div class="mt-auto h-[18px] flex items-center justify-center"><svg width="9" height="5" viewBox="0 0 9 5"><path d="M0 0H9L4.500 5Z" fill="#46546c"/></svg></div>
  </div>
</div>

<!-- numaralı işaretler -->
<span class="absolute z-20 left-[172px] top-[204px] w-[29px] h-[29px] rounded-full bg-[#fb0000] text-white text-[19px] leading-[29px] text-center font-['Liberation_Sans',sans-serif]">1</span>
<span class="absolute z-20 left-[161px] top-[467px] w-[29px] h-[29px] rounded-full bg-[#fb0000] text-white text-[19px] leading-[29px] text-center font-['Liberation_Sans',sans-serif]">2</span>
<span class="absolute z-20 left-[897px] top-[602px] w-[29px] h-[29px] rounded-full bg-[#fb0000] text-white text-[19px] leading-[29px] text-center font-['Liberation_Sans',sans-serif]">3</span>
<span class="absolute z-20 left-[978px] top-[546px] w-[29px] h-[29px] rounded-full bg-[#fb0000] text-white text-[19px] leading-[29px] text-center font-['Liberation_Sans',sans-serif]">4</span>
<span class="absolute z-20 left-[683px] top-[13px] w-[29px] h-[29px] rounded-full bg-[#fb0000] text-white text-[19px] leading-[29px] text-center font-['Liberation_Sans',sans-serif]">5</span>

</body>
</html>
